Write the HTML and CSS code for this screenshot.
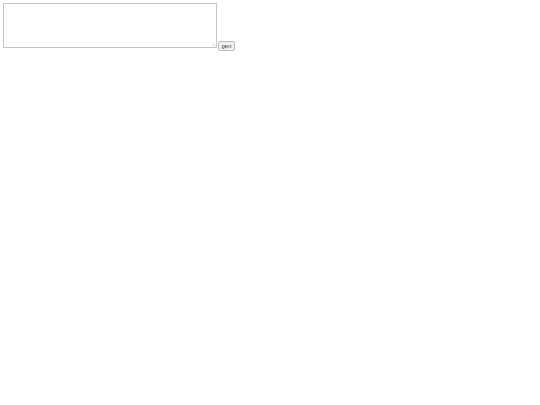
FILE: index.html
```html
<!DOCTYPE html>
<html>
<head>
<meta charset="utf-8">
<link rel="stylesheet" href="styles.css">
</head>
<body>
<div class="row">
<textarea class="input"></textarea>
<button class="gen">gen</button>
</div>
</body>
</html>
```
FILE: styles.css
```css
html, body { margin: 0; padding: 0; background: #fff; }
body { padding: 3px; font-family: "Liberation Sans", Arial, sans-serif; }
.row { display: flex; align-items: flex-end; gap: 1px; }
.input {
  box-sizing: border-box;
  width: 214px;
  height: 45px;
  margin: 0;
  border: 1px solid #c4c4c4;
  padding: 1px;
  resize: none;
  background:
    linear-gradient(135deg, transparent 0 60%, #d0d0d0 60% 70%, transparent 70% 80%, #d0d0d0 80% 90%, transparent 90%) no-repeat right 1px bottom 1px / 4px 4px,
    #fff;
  font-family: "Liberation Mono", monospace;
  font-size: 7px;
}
.gen {
  box-sizing: border-box;
  height: 10px;
  width: 17px;
  margin: 0 0 -3px 0;
  padding: 0;
  display: flex;
  align-items: center;
  justify-content: center;
  font-family: "Liberation Sans", Arial, sans-serif;
  font-size: 6px;
  line-height: 1;
  color: #333;
  background: #f0f0f0;
  border: 1px solid #bbb;
  border-radius: 2px;
  will-change: transform;
  -webkit-font-smoothing: antialiased;
}
```
